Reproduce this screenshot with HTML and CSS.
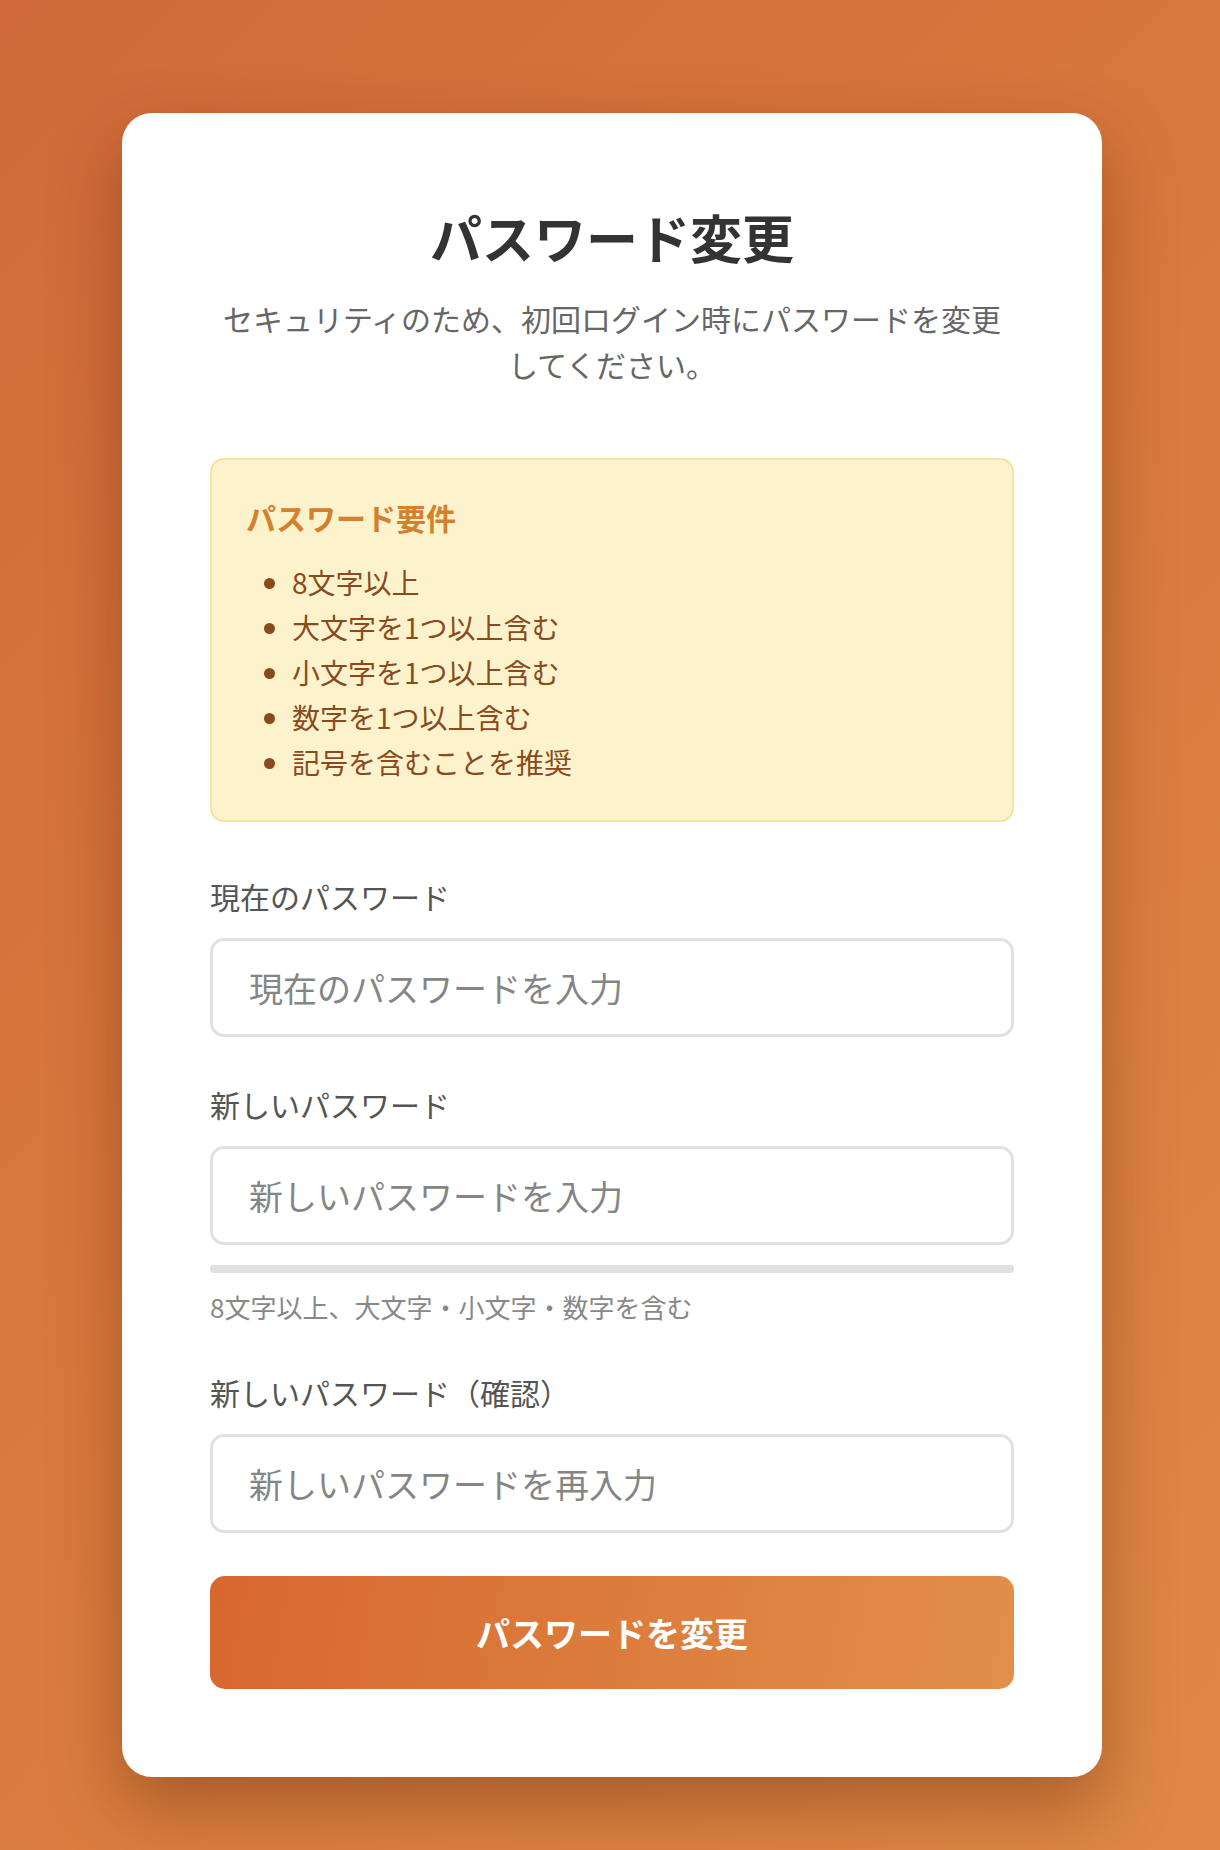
FILE: index.html
```html
<!DOCTYPE html>
<html lang="ja">
<head>
<meta charset="utf-8">
<title>パスワード変更</title>
<link rel="stylesheet" href="styles.css">
</head>
<body>
<main class="page">
  <section class="card">
    <h1 class="title">パスワード変更</h1>
    <p class="subtitle">セキュリティのため、初回ログイン時にパスワードを変更してください。</p>

    <div class="requirements">
      <h2 class="req-title">パスワード要件</h2>
      <ul class="req-list">
        <li>8文字以上</li>
        <li>大文字を1つ以上含む</li>
        <li>小文字を1つ以上含む</li>
        <li>数字を1つ以上含む</li>
        <li>記号を含むことを推奨</li>
      </ul>
    </div>

    <form class="form">
      <div class="field">
        <label class="label" for="current">現在のパスワード</label>
        <input class="input" id="current" type="password" placeholder="現在のパスワードを入力">
      </div>
      <div class="field">
        <label class="label" for="new">新しいパスワード</label>
        <input class="input" id="new" type="password" placeholder="新しいパスワードを入力">
        <div class="strength"></div>
        <div class="hint">8文字以上、大文字・小文字・数字を含む</div>
      </div>
      <div class="field">
        <label class="label" for="confirm">新しいパスワード（確認）</label>
        <input class="input" id="confirm" type="password" placeholder="新しいパスワードを再入力">
      </div>
      <button class="submit" type="button">パスワードを変更</button>
    </form>
  </section>
</main>
</body>
</html>
```

FILE: styles.css
```css
* {
  box-sizing: border-box;
}

html, body {
  margin: 0;
  padding: 0;
}

body {
  font-family: "Noto Sans CJK JP", "Noto Sans", sans-serif;
  background: linear-gradient(135deg, #d1693a 0%, #d97a3e 50%, #df8845 100%);
  min-height: 1850px;
}

.page {
  padding: 113px 118px 72px 122px;
  display: flex;
  justify-content: center;
}

.card {
  width: 980px;
  background: #ffffff;
  border-radius: 30px;
  padding: 87px 88px 88px;
  box-shadow: 0 30px 70px rgba(90, 35, 5, 0.4);
}

.title {
  margin: 0;
  text-align: center;
  font-size: 52px;
  line-height: 74px;
  font-weight: 700;
  color: #333333;
}

.subtitle {
  margin: 21px 10px 0;
  text-align: center;
  font-size: 30px;
  line-height: 46px;
  color: #666666;
}

.requirements {
  margin-top: 71px;
  background: #fcf3cc;
  border: 2px solid #f7e39c;
  border-radius: 14px;
  padding: 35px 34px 35px;
}

.req-title {
  margin: 0;
  font-size: 30px;
  line-height: 45px;
  font-weight: 700;
  color: #d4802c;
}

.req-list {
  margin: 20px 0 0;
  padding-left: 46px;
  font-size: 28px;
  line-height: 45px;
  color: #8a4a1e;
}

.form {
  margin-top: 52px;
  display: flex;
  flex-direction: column;
}

.field {
  display: flex;
  flex-direction: column;
  margin-bottom: 45px;
}

.label {
  font-size: 30px;
  line-height: 45px;
  color: #555555;
  margin-bottom: 19px;
}

.input {
  height: 99px;
  width: 100%;
  border: 3px solid #e0e0e0;
  border-radius: 14px;
  padding: 0 36px;
  font-family: inherit;
  font-size: 34px;
  color: #333333;
  background: #ffffff;
  outline: none;
}

.input::placeholder {
  color: #858585;
}

.strength {
  margin-top: 20px;
  height: 8px;
  border-radius: 4px;
  background: #e0e0e0;
}

.hint {
  margin-top: 14px;
  font-size: 26px;
  line-height: 39px;
  color: #888888;
}

.field:nth-child(2) {
  margin-bottom: 44px;
}

.field:nth-child(3) {
  margin-bottom: 43px;
}

.submit {
  height: 113px;
  width: 100%;
  border: none;
  border-radius: 15px;
  background: linear-gradient(100deg, #d8672f 0%, #dc7c3c 50%, #e28f4a 100%);
  color: #ffffff;
  font-family: inherit;
  font-size: 34px;
  font-weight: 700;
  cursor: pointer;
}
```
